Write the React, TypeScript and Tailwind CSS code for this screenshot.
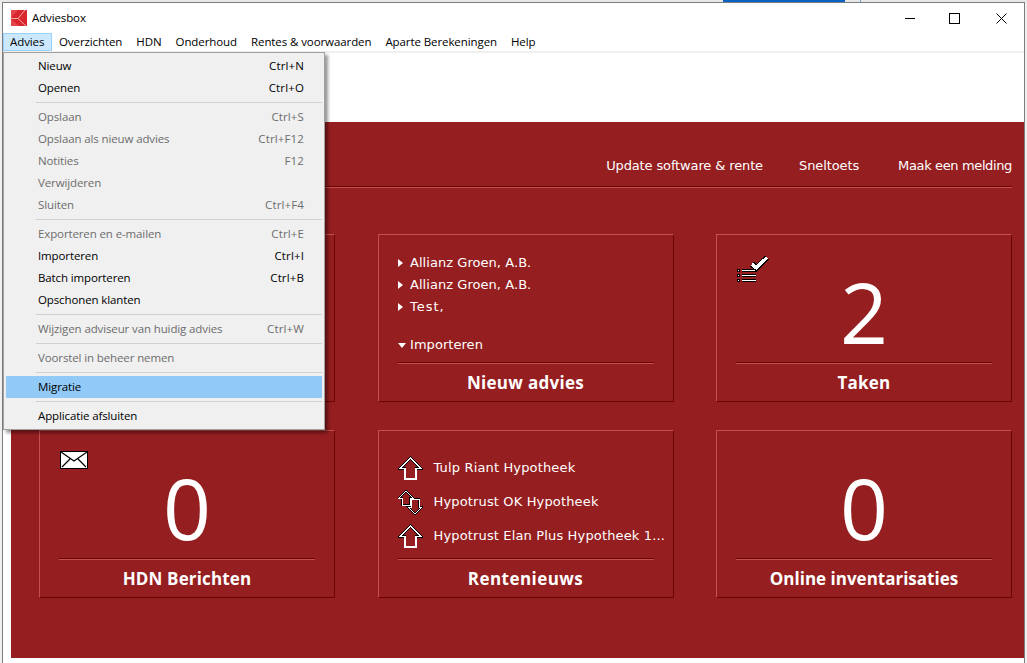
import React from "react";

const menu: (null | { t: string; k?: string; d?: boolean; h?: boolean })[] = [
  { t: "Nieuw", k: "Ctrl+N" },
  { t: "Openen", k: "Ctrl+O" },
  null,
  { t: "Opslaan", k: "Ctrl+S", d: true },
  { t: "Opslaan als nieuw advies", k: "Ctrl+F12", d: true },
  { t: "Notities", k: "F12", d: true },
  { t: "Verwijderen", d: true },
  { t: "Sluiten", k: "Ctrl+F4", d: true },
  null,
  { t: "Exporteren en e-mailen", k: "Ctrl+E", d: true },
  { t: "Importeren", k: "Ctrl+I" },
  { t: "Batch importeren", k: "Ctrl+B" },
  { t: "Opschonen klanten" },
  null,
  { t: "Wijzigen adviseur van huidig advies", k: "Ctrl+W", d: true },
  null,
  { t: "Voorstel in beheer nemen", d: true },
  null,
  { t: "Migratie", h: true },
  null,
  { t: "Applicatie afsluiten" },
];

const top = ["Overzichten", "HDN", "Onderhoud", "Rentes & voorwaarden", "Aparte Berekeningen", "Help"];

function Logo() {
  return (
    <svg width="16" height="16" viewBox="0 0 16 16" className="ml-[8px] mr-[5px]">
      <rect width="16" height="16" fill="#d9252c" />
      <path d="M0 0 H7 L0 8 Z M0 16 H8 L0 9 Z" fill="#e2454a" />
      <path d="M14 0 L7 8.5 L15 16 M7 8.5 L0 8.5" fill="none" stroke="#f4a8a8" strokeWidth="1" />
    </svg>
  );
}

function ArrowUp() {
  return (
    <svg width="25" height="25" viewBox="0 0 25 25" className="shrink-0" shapeRendering="crispEdges">
      <polygon points="12.5,2 23,12.5 18,12.5 18,23 7,23 7,12.5 2,12.5" fill="none" stroke="#000" strokeWidth="2.6" />
      <polygon points="12.5,2 23,12.5 18,12.5 18,23 7,23 7,12.5 2,12.5" fill="none" stroke="#fff" strokeWidth="1.2" />
    </svg>
  );
}

function ArrowBoth() {
  const a = "8,1 1,8 4,8 4,15 12,15 12,8 15,8";
  const b = "17,24 24,17 21,17 21,9 13,9 13,17 10,17";
  return (
    <svg width="25" height="25" viewBox="0 0 25 25" className="shrink-0" shapeRendering="crispEdges">
      <polygon points={b} fill="none" stroke="#000" strokeWidth="2.4" />
      <polygon points={b} fill="none" stroke="#fff" strokeWidth="1" />
      <polygon points={a} fill="none" stroke="#000" strokeWidth="2.4" />
      <polygon points={a} fill="none" stroke="#fff" strokeWidth="1" />
    </svg>
  );
}

function Card({ title, children, icon, titleClass = "" }: { title: string; children?: React.ReactNode; icon?: React.ReactNode; titleClass?: string }) {
  return (
    <div className="relative h-[168px] flex flex-col border border-t-[#c45052] border-l-[#c45052] border-r-[#6a0404] border-b-[#6a0404] px-[19px]">
      {icon}
      <div className="h-[127px] shrink-0">{children}</div>
      <div className="h-[2px] border-t border-t-[#6a0404] border-b border-b-[#c45052]" />
      <div className={`text-center text-white font-bold text-[17px] leading-[20px] mt-[9px] font-['Open_Sans',sans-serif] ${titleClass}`}>{title}</div>
    </div>
  );
}

function BigNumber({ n }: { n: string }) {
  return (
    <div className="text-center text-white text-[84px] leading-[84px] pt-[35px] font-['Open_Sans',sans-serif] font-normal">{n}</div>
  );
}

function Bullet({ children }: { children: React.ReactNode }) {
  return (
    <div className="flex items-center h-[22px]">
      <svg width="5" height="8" viewBox="0 0 5 8" className="mr-[7.5px]"><polygon points="0,0 5,4 0,8" fill="#fff" /></svg>
      {children}
    </div>
  );
}

export default function App() {
  return (
    <div className="relative w-[1027px] h-[663px] overflow-hidden bg-[#f0f0f0] flex flex-col font-['Open_Sans',sans-serif]">
      <div className="h-[2px] flex shrink-0">
        <div className="w-[723px] bg-[#e8e8e8]" />
        <div className="w-[122px] bg-[#0a62c2]" />
        <div className="w-[15px] bg-[#e8e8e8]" />
        <div className="w-[1px] bg-[#7aa0d0]" />
        <div className="flex-1 bg-[#e8e8e8]" />
      </div>
      <div className="flex flex-1 min-h-0">
        <div className="w-[2px] bg-[#f0f0f0]" />
        <div className="w-[1023px] border border-[#7d7d7d] border-b-0 bg-white flex flex-col">
          <div className="h-[30px] flex items-center shrink-0">
            <Logo />
            <span className="text-[11.5px] tracking-[-0.12px] text-black">Adviesbox</span>
            <div className="ml-auto flex items-center">
              <div className="w-[10px] h-[1px] bg-black mr-[34px]" />
              <div className="w-[11px] h-[11px] border border-black mr-[36px]" />
              <svg width="11" height="11" viewBox="0 0 11 11" className="mr-[17px]"><path d="M0.5 0.5 L10.5 10.5 M10.5 0.5 L0.5 10.5" stroke="#000" strokeWidth="1" fill="none" /></svg>
            </div>
          </div>
          <div className="h-[20px] flex items-stretch shrink-0 border-b-2 border-b-[#f0f0f0] text-[11.5px] tracking-[-0.09px] text-black">
            <div className="w-[49px] bg-[#cce8ff] border border-[#99d1ff] px-[6px] flex items-center">Advies</div>
            {top.map((t) => (
              <div key={t} className="px-[7px] flex items-center">{t}</div>
            ))}
          </div>
          <div className="h-[69px] shrink-0" />
          <div className="flex-1 min-h-0 ml-[8px] mb-[5px] bg-[#951e20] pl-[28px] pr-[12px] flex flex-col">
            <div className="h-[66px] shrink-0 flex flex-col">
              <div className="flex-1 flex justify-end items-end pb-[12px] text-white text-[13px] leading-[16px] font-['DejaVu_Sans',sans-serif]">
                <span className="tracking-[-0.13px]">Update software &amp; rente</span>
                <span className="ml-[36px] tracking-[-0.1px]">Sneltoets</span>
                <span className="ml-[39px] tracking-[-0.37px]">Maak een melding</span>
              </div>
              <div className="h-[2px] border-t border-t-[#6a0404] border-b border-b-[#c45052]" />
            </div>
            <div className="grid grid-cols-[296px_296px_296px] justify-between gap-y-[28px] mt-[46px]">
              <Card title="" />
              <Card title="Nieuw advies" titleClass="tracking-[0.3px]">
                <div className="pt-[17px] text-white text-[13px] tracking-[0.05px] font-['DejaVu_Sans',sans-serif]">
                  <Bullet>Allianz Groen, A.B.</Bullet>
                  <Bullet>Allianz Groen, A.B.</Bullet>
                  <Bullet><span className="tracking-[1px]">Test,</span></Bullet>
                  <div className="flex items-center h-[22px] mt-[16px]">
                    <svg width="8" height="5" viewBox="0 0 8 5" className="mr-[4.5px]"><polygon points="0,0 8,0 4,5" fill="#fff" /></svg>
                    Importeren
                  </div>
                </div>
              </Card>
              <Card
                title="Taken"
                titleClass="tracking-[0.2px]"
                icon={
                  <svg width="34" height="30" viewBox="0 0 34 30" className="absolute left-[20px] top-[20px]" shapeRendering="crispEdges">
                    <rect x="0" y="14" width="3" height="3" fill="#000" />
                    <rect x="1" y="15" width="1" height="1" fill="#fff" />
                    <rect x="0" y="19" width="3" height="3" fill="#000" />
                    <rect x="1" y="20" width="1" height="1" fill="#fff" />
                    <rect x="0" y="24" width="3" height="3" fill="#000" />
                    <rect x="1" y="25" width="1" height="1" fill="#fff" />
                    <rect x="5" y="14" width="14" height="3" fill="#000" />
                    <rect x="5" y="15" width="14" height="1" fill="#fff" />
                    <rect x="5" y="19" width="14" height="3" fill="#000" />
                    <rect x="5" y="20" width="14" height="1" fill="#fff" />
                    <rect x="5" y="24" width="14" height="3" fill="#000" />
                    <rect x="5" y="25" width="14" height="1" fill="#fff" />
                    <path d="M15 9 L19.5 13 L30 2.5" fill="none" stroke="#000" strokeWidth="6" />
                    <path d="M15 9 L19.5 13 L30 2.5" fill="none" stroke="#fff" strokeWidth="3.5" />
                  </svg>
                }
              >
                <BigNumber n="2" />
              </Card>
              <Card
                title="HDN Berichten"
                titleClass="tracking-[0.15px]"
                icon={
                  <svg width="28" height="18" viewBox="0 0 28 18" className="absolute left-[20px] top-[20px]">
                    <rect x="0.5" y="0.5" width="27" height="17" fill="#fff" stroke="#000" />
                    <path d="M1 1 L14 10 L27 1 M2 16 L10 8 M26 16 L18 8" fill="none" stroke="#000" strokeWidth="1.2" />
                  </svg>
                }
              >
                <BigNumber n="0" />
              </Card>
              <Card title="Rentenieuws" titleClass="tracking-[0.45px]">
                <div className="pt-[20px] text-white text-[13px] tracking-[0.15px] font-['DejaVu_Sans',sans-serif] whitespace-nowrap">
                  <div className="flex items-center h-[34px] gap-[11px]"><ArrowUp />Tulp Riant Hypotheek</div>
                  <div className="flex items-center h-[34px] gap-[11px]"><ArrowBoth />Hypotrust OK Hypotheek</div>
                  <div className="flex items-center h-[34px] gap-[11px]"><ArrowUp />Hypotrust Elan Plus Hypotheek 1...</div>
                </div>
              </Card>
              <Card title="Online inventarisaties">
                <BigNumber n="0" />
              </Card>
            </div>
          </div>
        </div>
        <div className="flex-1 bg-[#f0f0f0]" />
      </div>

      <div className="absolute left-[3px] top-[52px] w-[322px] h-[378px] bg-[#f0f0f0] border border-[#a0a0a0] shadow-[3px_3px_3px_rgba(0,0,0,0.4)] pt-[2px] px-[2px] text-[11.5px] tracking-[-0.12px]">
        {menu.map((m, i) =>
          m === null ? (
            <div key={i} className="h-[7px] pl-[30px] flex items-center">
              <div className="h-[1px] w-full bg-[#d0d0d0]" />
            </div>
          ) : (
            <div
              key={i}
              className={`h-[22px] flex items-center justify-between pl-[32px] pr-[18px] ${m.d ? "text-[#6d6d6d]" : "text-black"} ${m.h ? "bg-[#91c9f7]" : ""}`}
            >
              <span>{m.t}</span>
              {m.k ? <span className="tracking-[0.13px]">{m.k}</span> : null}
            </div>
          ),
        )}
      </div>
    </div>
  );
}
